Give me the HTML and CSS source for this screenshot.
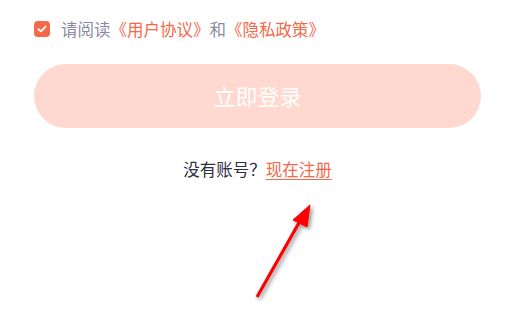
FILE: index.html
```html
<!DOCTYPE html>
<html lang="zh-CN">
<head>
  <meta charset="UTF-8">
  <meta name="viewport" content="width=device-width, initial-scale=1.0">
  <title>登录</title>
  <link rel="stylesheet" href="styles.css">
</head>
<body>
  <div class="login">
    <div class="agree">
      <span class="check">
        <svg width="10" height="8" viewBox="0 0 10 8"><path d="M1.5 4.2 L4 6.4 L8.6 1.6" fill="none" stroke="#fff" stroke-width="1.8" stroke-linecap="round" stroke-linejoin="round"/></svg>
      </span>
      <span class="agree-text">请阅读<a class="link">《用户协议》</a>和<a class="link">《隐私政策》</a></span>
    </div>
    <button class="btn-login">立即登录</button>
    <div class="register">没有账号？<a class="reg-link">现在注册</a></div>
  </div>
  <svg class="arrow" width="518" height="314" viewBox="0 0 518 314">
    <defs>
      <filter id="sh" x="-50%" y="-50%" width="200%" height="200%">
        <feDropShadow dx="2" dy="2" stdDeviation="2" flood-color="#000" flood-opacity="0.45"/>
      </filter>
    </defs>
    <g filter="url(#sh)" fill="#ff0000" stroke="#ff0000">
      <line x1="257" y1="297" x2="300" y2="221" stroke-width="3.2"/>
      <polygon points="310,205 293,220 307,227" stroke-width="1" stroke-linejoin="round"/>
    </g>
  </svg>
</body>
</html>
```
FILE: styles.css
```css
body {
  margin: 0;
  background: #fff;
  font-family: "Noto Sans CJK SC", "Noto Sans", sans-serif;
}

.login {
  width: 447px;
  padding: 20px 0 0 34px;
}

.agree {
  display: flex;
  align-items: center;
  height: 18px;
}

.check {
  width: 16px;
  height: 16px;
  border-radius: 4px;
  background: #f5694b;
  display: flex;
  align-items: center;
  justify-content: center;
  margin-right: 11px;
}

.agree-text {
  font-size: 16.5px;
  color: #8a8ba3;
  line-height: 18px;
}

.link {
  color: #f5694b;
}

.btn-login {
  display: block;
  width: 447px;
  height: 64px;
  margin-top: 26px;
  border: none;
  border-radius: 32px;
  background: #ffd8cf;
  color: #fff;
  font-family: inherit;
  font-size: 22px;
  padding: 0 0 3px;
}

.register {
  margin-top: 30px;
  text-align: center;
  font-size: 16.5px;
  color: #2e3042;
  line-height: 22px;
}

.reg-link {
  color: #f5694b;
  text-decoration: underline;
  text-underline-offset: 3px;
}

.arrow {
  position: absolute;
  left: 0;
  top: 0;
}
```
